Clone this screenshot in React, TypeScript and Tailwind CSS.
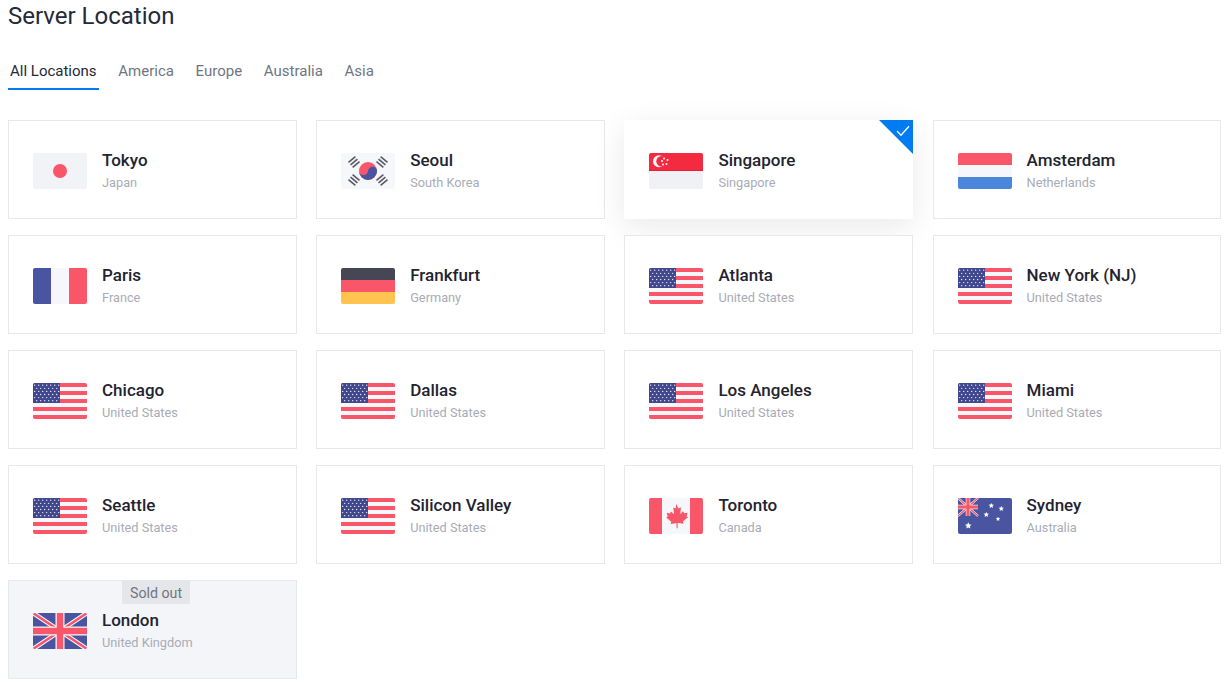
import type { ReactNode } from "react";

const RED = "#f9566a";
const BLUE = "#4a55a2";
const LIGHT = "#f5f7fa";

function FlagSvg({ children }: { children: ReactNode }) {
  return (
    <svg viewBox="0 0 54 36" width="54" height="36" className="block shrink-0 rounded-[2px]">
      {children}
    </svg>
  );
}

function Japan() {
  return (
    <FlagSvg>
      <rect width="54" height="36" fill="#f2f3f7" />
      <circle cx="27" cy="18" r="7" fill={RED} />
    </FlagSvg>
  );
}

function Korea() {
  const bars = (cx: number, cy: number, angle: number) => (
    <g transform={`translate(${cx} ${cy}) rotate(${angle})`} fill="#5a5a66">
      <rect x="-4.5" y="-4" width="9" height="1.6" />
      <rect x="-4.5" y="-0.8" width="9" height="1.6" />
      <rect x="-4.5" y="2.4" width="9" height="1.6" />
    </g>
  );
  return (
    <FlagSvg>
      <rect width="54" height="36" fill={LIGHT} />
      {bars(13, 9, -40)}
      {bars(41, 9, 40)}
      {bars(13, 27, 40)}
      {bars(41, 27, -40)}
      <circle cx="27" cy="18" r="9" fill={RED} />
      <path d="M18 18a9 9 0 0 0 18 0c0-2.400-2-4.200-4.500-4.200S27.500 15.600 27 18s-2 4-4.500 4S18 20.400 18 18z" fill={BLUE} />
    </FlagSvg>
  );
}

function Singapore() {
  return (
    <FlagSvg>
      <rect width="54" height="36" fill="#f0f1f5" />
      <rect width="54" height="18" fill="#f42a41" />
      <rect y="17" width="54" height="1" fill="#e81e35" />
      <circle cx="10" cy="8.300" r="6" fill={LIGHT} />
      <circle cx="12.500" cy="8.300" r="5.200" fill="#f42a41" />
      <g fill={LIGHT}>
        <circle cx="15" cy="5.500" r="1" />
        <circle cx="18.500" cy="7" r="1" />
        <circle cx="17.500" cy="11" r="1" />
        <circle cx="14" cy="11.500" r="1" />
        <circle cx="13" cy="8" r="1" />
      </g>
    </FlagSvg>
  );
}

function Netherlands() {
  return (
    <FlagSvg>
      <rect width="54" height="12" fill={RED} />
      <rect y="12" width="54" height="12" fill={LIGHT} />
      <rect y="24" width="54" height="12" fill="#4a86dc" />
    </FlagSvg>
  );
}

function France() {
  return (
    <FlagSvg>
      <rect width="18" height="36" fill={BLUE} />
      <rect x="18" width="18" height="36" fill={LIGHT} />
      <rect x="36" width="18" height="36" fill={RED} />
    </FlagSvg>
  );
}

function Germany() {
  return (
    <FlagSvg>
      <rect width="54" height="12" fill="#464655" />
      <rect y="12" width="54" height="12" fill={RED} />
      <rect y="24" width="54" height="12" fill="#ffc350" />
    </FlagSvg>
  );
}

function Usa() {
  const stripes = Array.from({ length: 9 }, (_, i) => i);
  const dots: [number, number][] = [];
  for (let r = 0; r < 6; r++) {
    const odd = r % 2 === 1;
    for (let c = 0; c < (odd ? 6 : 7); c++) {
      dots.push([1.7 + c * 4 + (odd ? 2 : 0), 2.2 + r * 3.1]);
    }
  }
  return (
    <FlagSvg>
      {stripes.map((i) => (
        <rect key={i} y={i * 4} width="54" height="4" fill={i % 2 === 0 ? RED : LIGHT} />
      ))}
      <rect width="27" height="20" fill="#41478f" />
      {dots.map(([x, y], i) => (
        <circle key={i} cx={x} cy={y} r="0.65" fill={LIGHT} />
      ))}
    </FlagSvg>
  );
}

function Canada() {
  return (
    <FlagSvg>
      <rect width="54" height="36" fill={LIGHT} />
      <rect width="13" height="36" fill={RED} />
      <rect x="41" width="13" height="36" fill={RED} />
      <path
        transform="translate(27 18) scale(1.12) translate(-27 -18)"
        d="M27 7l2.200 4.200 2.300-1-.8 6 2.700-2.500 1 1.800 3-.5-1 3.300 1.300.8-4.500 3.800.6 2-4.600-.6-.7 0V29h-1V24.500l-.7 0-4.600.6.600-2-4.500-3.800 1.300-.8-1-3.300 3 .5 1-1.800 2.700 2.500-.8-6 2.300 1z"
        fill={RED}
      />
    </FlagSvg>
  );
}

function UnionJack({ w, h }: { w: number; h: number }) {
  return (
    <g>
      <rect width={w} height={h} fill={BLUE} />
      <path d={`M0 0L${w} ${h}M${w} 0L0 ${h}`} stroke={LIGHT} strokeWidth={h * 0.13} />
      <path d={`M0 0L${w} ${h}M${w} 0L0 ${h}`} stroke={RED} strokeWidth={h * 0.07} />
      <rect x={w / 2 - h * 0.125} width={h * 0.25} height={h} fill={LIGHT} />
      <rect y={h / 2 - h * 0.125} width={w} height={h * 0.25} fill={LIGHT} />
      <rect x={w / 2 - h * 0.09} width={h * 0.18} height={h} fill={RED} />
      <rect y={h / 2 - h * 0.09} width={w} height={h * 0.18} fill={RED} />
    </g>
  );
}

function Australia() {
  const star = (x: number, y: number, s: number) => (
    <path
      transform={`translate(${x} ${y}) scale(${s})`}
      d="M0-1L.29-.4.95-.31.47.15.59.81 0 .5-.59.81-.47.15-.95-.31-.29-.4z"
      fill={LIGHT}
    />
  );
  return (
    <FlagSvg>
      <rect width="54" height="36" fill={BLUE} />
      <UnionJack w={20} h={18} />
      {star(10.300, 27.700, 3.400)}
      {star(33.300, 7.700, 2.800)}
      {star(43.300, 10.700, 2.800)}
      {star(28.300, 16.700, 2.800)}
      {star(40, 21, 2.300)}
    </FlagSvg>
  );
}

function Uk() {
  return (
    <FlagSvg>
      <UnionJack w={54} h={36} />
    </FlagSvg>
  );
}

const US = "United States";

const locations = [
  { city: "Tokyo", country: "Japan", flag: <Japan /> },
  { city: "Seoul", country: "South Korea", flag: <Korea /> },
  { city: "Singapore", country: "Singapore", flag: <Singapore />, selected: true },
  { city: "Amsterdam", country: "Netherlands", flag: <Netherlands /> },
  { city: "Paris", country: "France", flag: <France /> },
  { city: "Frankfurt", country: "Germany", flag: <Germany /> },
  { city: "Atlanta", country: US, flag: <Usa /> },
  { city: "New York (NJ)", country: US, flag: <Usa /> },
  { city: "Chicago", country: US, flag: <Usa /> },
  { city: "Dallas", country: US, flag: <Usa /> },
  { city: "Los Angeles", country: US, flag: <Usa /> },
  { city: "Miami", country: US, flag: <Usa /> },
  { city: "Seattle", country: US, flag: <Usa /> },
  { city: "Silicon Valley", country: US, flag: <Usa /> },
  { city: "Toronto", country: "Canada", flag: <Canada /> },
  { city: "Sydney", country: "Australia", flag: <Australia /> },
  { city: "London", country: "United Kingdom", flag: <Uk />, soldOut: true },
];

const tabs = ["All Locations", "America", "Europe", "Australia", "Asia"];

function LocationCard({ city, country, flag, selected, soldOut }: (typeof locations)[number]) {
  let boxClass = "border-[#e6e8eb] bg-white";
  if (selected) boxClass = "border-transparent bg-white shadow-[0_8px_30px_rgba(0,0,0,0.09)]";
  if (soldOut) boxClass = "border-[#e6e8eb] bg-[#f4f5f9]";

  return (
    <div className={`relative flex h-[99px] items-center gap-[15px] border px-[24px] pt-[2px] ${boxClass}`}>
      {soldOut && (
        <span className="absolute left-[113px] top-[0px] h-[23px] rounded-b-[2px] bg-[#e5e6ea] px-2 text-[14.2px] leading-[25px] text-[#70757e]">
          Sold out
        </span>
      )}
      {flag}
      <div>
        <div className="text-[17px] leading-[24px] font-medium text-[#1f2430]">{city}</div>
        <div className="text-[12.75px] leading-[21px] text-[#a8acb6]">{country}</div>
      </div>
      {selected && (
        <svg viewBox="0 0 34 34" width="34" height="34" className="absolute top-[-1px] right-[-1px]">
          <path d="M0 0H34V34z" fill="#007bf0" />
          <path d="M18 11l4 4.300 8-9" fill="none" stroke="#fff" strokeWidth="1.300" />
        </svg>
      )}
    </div>
  );
}

export default function App() {
  return (
    <div className="h-[685px] overflow-hidden bg-white pr-[4.7px] pl-[8px] font-['Roboto',sans-serif]">
      <h1 className="pt-[1px] text-2xl leading-[30px] font-normal text-[#232a38]">Server Location</h1>

      <div className="mt-[24px] flex gap-[17.7px]">
        {tabs.map((tab, i) => (
          <div
            key={tab}
            className={`h-[35px] px-[2px] pt-[5px] text-[15px] leading-[22px] ${
              i === 0 ? "border-b-2 border-[#007bf0] text-[#232a38]" : "text-[#6f7683]"
            }`}
          >
            {tab}
          </div>
        ))}
      </div>

      <div className="mt-[30px] grid grid-cols-4 gap-x-[19.45px] gap-y-[16px]">
        {locations.map((loc) => (
          <LocationCard key={loc.city} {...loc} />
        ))}
      </div>
    </div>
  );
}
